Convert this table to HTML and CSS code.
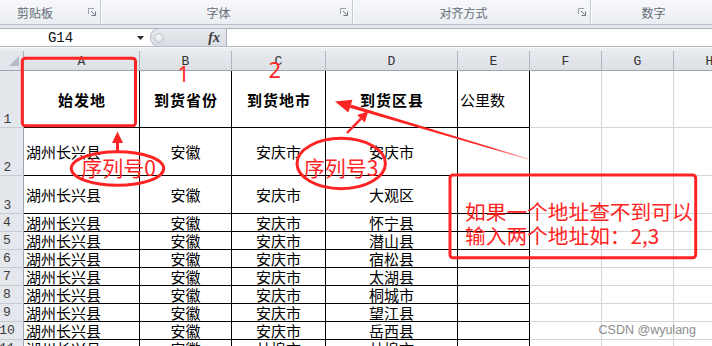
FILE: index.html
```html
<!DOCTYPE html>
<html lang="zh-CN">
<head>
<meta charset="utf-8">
<title>Excel</title>
<link rel="stylesheet" href="styles.css">
</head>
<body>
<div class="app">
  <div class="ribbon">
    <div class="group g1">
      <span class="group-label">剪贴板</span>
      <svg class="launcher" viewBox="0 0 8 8"><path d="M0.5 6V0.5H6" stroke="#9aa1aa" fill="none"/><path d="M3 3L6.5 6.5M7.5 3.5V7.5H3.5" stroke="#6c747f" fill="none"/></svg>
    </div>
    <div class="group g2">
      <span class="group-label">字体</span>
      <svg class="launcher" viewBox="0 0 8 8"><path d="M0.5 6V0.5H6" stroke="#9aa1aa" fill="none"/><path d="M3 3L6.5 6.5M7.5 3.5V7.5H3.5" stroke="#6c747f" fill="none"/></svg>
    </div>
    <div class="group g3">
      <span class="group-label">对齐方式</span>
      <svg class="launcher" viewBox="0 0 8 8"><path d="M0.5 6V0.5H6" stroke="#9aa1aa" fill="none"/><path d="M3 3L6.5 6.5M7.5 3.5V7.5H3.5" stroke="#6c747f" fill="none"/></svg>
    </div>
    <div class="group g4">
      <span class="group-label">数字</span>
      <span class="launcher"></span>
    </div>
  </div>
  <div class="band"></div>
  <div class="formula-bar">
    <div class="namebox">
      <span class="namebox-text">G14</span>
      <svg class="dropdown" viewBox="0 0 7 4"><path d="M0 0H7L3.5 4Z" fill="#2b2b2b"/></svg>
    </div>
    <div class="grip">
      <span class="knob"></span>
      <span class="fx">fx</span>
    </div>
    <div class="formula-input"></div>
  </div>
  <div class="band2"></div>

  <div class="sheet">
    <!-- header row -->
    <div class="corner"><svg width="10" height="10" viewBox="0 0 10 10"><path d="M10 0V10H0Z" fill="#b7bcc4"/></svg></div>
    <div class="ch">A</div><div class="ch">B</div><div class="ch">C</div><div class="ch">D</div>
    <div class="ch">E</div><div class="ch">F</div><div class="ch">G</div><div class="ch">H</div>

    <!-- row 1 -->
    <div class="rh">1</div>
    <div class="c bk ctr bold">始发地</div>
    <div class="c bk ctr bold">到货省份</div>
    <div class="c bk ctr bold">到货地市</div>
    <div class="c bk ctr bold">到货区县</div>
    <div class="c bk lft">公里数</div>
    <div class="c"></div><div class="c"></div><div class="c"></div>

    <!-- row 2 -->
    <div class="rh">2</div>
    <div class="c bk lft">湖州长兴县</div>
    <div class="c bk ctr">安徽</div>
    <div class="c bk ctr">安庆市</div>
    <div class="c bk ctr">安庆市</div>
    <div class="c bk"></div>
    <div class="c"></div><div class="c"></div><div class="c"></div>

    <!-- row 3 -->
    <div class="rh">3</div>
    <div class="c bk lft">湖州长兴县</div>
    <div class="c bk ctr">安徽</div>
    <div class="c bk ctr">安庆市</div>
    <div class="c bk ctr">大观区</div>
    <div class="c bk"></div>
    <div class="c"></div><div class="c"></div><div class="c"></div>

    <!-- row 4 -->
    <div class="rh sm">4</div>
    <div class="c bk lft sm">湖州长兴县</div>
    <div class="c bk ctr sm">安徽</div>
    <div class="c bk ctr sm">安庆市</div>
    <div class="c bk ctr sm">怀宁县</div>
    <div class="c bk sm"></div>
    <div class="c sm"></div><div class="c sm"></div><div class="c sm"></div>

    <!-- row 5 -->
    <div class="rh sm">5</div>
    <div class="c bk lft sm">湖州长兴县</div>
    <div class="c bk ctr sm">安徽</div>
    <div class="c bk ctr sm">安庆市</div>
    <div class="c bk ctr sm">潜山县</div>
    <div class="c bk sm"></div>
    <div class="c sm"></div><div class="c sm"></div><div class="c sm"></div>

    <!-- row 6 -->
    <div class="rh sm">6</div>
    <div class="c bk lft sm">湖州长兴县</div>
    <div class="c bk ctr sm">安徽</div>
    <div class="c bk ctr sm">安庆市</div>
    <div class="c bk ctr sm">宿松县</div>
    <div class="c bk sm"></div>
    <div class="c sm"></div><div class="c sm"></div><div class="c sm"></div>

    <!-- row 7 -->
    <div class="rh sm">7</div>
    <div class="c bk lft sm">湖州长兴县</div>
    <div class="c bk ctr sm">安徽</div>
    <div class="c bk ctr sm">安庆市</div>
    <div class="c bk ctr sm">太湖县</div>
    <div class="c bk sm"></div>
    <div class="c sm"></div><div class="c sm"></div><div class="c sm"></div>

    <!-- row 8 -->
    <div class="rh sm">8</div>
    <div class="c bk lft sm">湖州长兴县</div>
    <div class="c bk ctr sm">安徽</div>
    <div class="c bk ctr sm">安庆市</div>
    <div class="c bk ctr sm">桐城市</div>
    <div class="c bk sm"></div>
    <div class="c sm"></div><div class="c sm"></div><div class="c sm"></div>

    <!-- row 9 -->
    <div class="rh sm">9</div>
    <div class="c bk lft sm">湖州长兴县</div>
    <div class="c bk ctr sm">安徽</div>
    <div class="c bk ctr sm">安庆市</div>
    <div class="c bk ctr sm">望江县</div>
    <div class="c bk sm"></div>
    <div class="c sm"></div><div class="c sm"></div><div class="c sm"></div>

    <!-- row 10 -->
    <div class="rh sm">10</div>
    <div class="c bk lft sm">湖州长兴县</div>
    <div class="c bk ctr sm">安徽</div>
    <div class="c bk ctr sm">安庆市</div>
    <div class="c bk ctr sm">岳西县</div>
    <div class="c bk sm"></div>
    <div class="c sm"></div><div class="c sm"></div><div class="c sm"></div>

    <!-- row 11 -->
    <div class="rh sm">11</div>
    <div class="c bk lft sm">湖州长兴县</div>
    <div class="c bk ctr sm">安徽</div>
    <div class="c bk ctr sm">林埠市</div>
    <div class="c bk ctr sm">林埠市</div>
    <div class="c bk sm"></div>
    <div class="c sm"></div><div class="c sm"></div><div class="c sm"></div>
  </div>
</div>

<svg class="annot" width="712" height="346" viewBox="0 0 712 346">
  <defs>
    <linearGradient id="fade" gradientUnits="userSpaceOnUse" x1="335" y1="101" x2="528" y2="159">
      <stop offset="0" stop-color="#ff2424"/>
      <stop offset="0.8" stop-color="#ff2424"/>
      <stop offset="1" stop-color="#ff2424" stop-opacity="0.25"/>
    </linearGradient>
  </defs>
  <!-- box around A1 -->
  <rect x="22.3" y="58.3" width="113.2" height="67.4" rx="3" class="red-stroke"/>
  <!-- column index numbers -->
  <text x="183.5" y="81.7" class="ann-num">1</text>
  <text x="274.7" y="77.7" class="ann-num big">2</text>
  <!-- arrow up to A1 -->
  <path d="M117.5 151V141" class="red-line"/>
  <path d="M117.5 131.5L123 143H112Z" class="red-fill"/>
  <!-- ellipse 0 -->
  <ellipse cx="117.5" cy="168.5" rx="46.2" ry="16.8" class="red-stroke"/>
  <text x="118.5" y="176" class="ann-label">序列号0</text>
  <!-- ellipse 3 -->
  <ellipse cx="341.2" cy="163.5" rx="44.2" ry="25.2" class="red-stroke"/>
  <text x="341" y="175.5" class="ann-label">序列号3</text>
  <!-- arrow to D1 -->
  <path d="M347 133L361 118.7" class="red-line thin"/>
  <path d="M368.3 111.3L364.8 122.6L357.2 115Z" class="red-fill"/>
  <!-- long arrow from callout -->
  <path d="M350.9 104.5L528.2 158.5L527.8 159.5L349.7 107.7Z" fill="url(#fade)"/>
  <path d="M335 101.5L352.4 99.8L348.4 112.5Z" class="red-fill"/>
  <!-- callout box -->
  <rect x="450" y="175" width="245.7" height="82.7" rx="3" class="red-stroke"/>
  <text x="465" y="220" class="ann-callout">如果一个地址查不到可以</text>
  <text x="465" y="244.4" class="ann-callout">输入两个地址如：2,3</text>
  <!-- watermark -->
  <text x="696" y="334" class="watermark">CSDN @wyulang</text>
</svg>
</body>
</html>
```
FILE: styles.css
```css
* { box-sizing: border-box; }
html, body { margin: 0; padding: 0; }
body {
  width: 712px;
  height: 346px;
  overflow: hidden;
  position: relative;
  background: #fff;
  font-family: "Noto Sans CJK SC", "Noto Sans", sans-serif;
}
.app { width: 712px; overflow: hidden; }

/* ribbon group labels */
.ribbon {
  display: flex;
  height: 25px;
  margin-left: -14px;
  background: linear-gradient(#f7f8fa, #eaedf1);
  border-bottom: 1px solid #b8bfc9;
}
.group {
  flex: none;
  display: flex;
  align-items: center;
  height: 24px;
  border-right: 1px solid #c6ccd4;
  box-shadow: 1px 0 0 #fbfcfd;
}
.g1 { width: 115px; }
.g2 { width: 252px; }
.g3 { width: 238px; }
.g4 { width: 142px; }
.group-label {
  flex: 1;
  text-align: center;
  font-size: 12px;
  color: #646c78;
  line-height: 24px;
  padding-top: 2px;
}
.launcher {
  flex: none;
  width: 8px;
  height: 8px;
  margin: 0 4px;
  display: block;
}

.band { height: 3px; background: #e4e8ed; }

/* formula bar */
.formula-bar {
  display: flex;
  height: 19px;
  background: #fff;
  border-top: 1px solid #a9b0ba;
  border-bottom: 1px solid #b3bac3;
}
.namebox {
  width: 150px;
  flex: none;
  display: flex;
  align-items: center;
}
.namebox-text {
  width: 121px;
  text-align: center;
  font-family: "Liberation Mono", monospace;
  font-size: 14px;
  color: #111;
}
.dropdown {
  width: 7px;
  height: 4px;
  margin-left: 16px;
  display: block;
}
.grip {
  width: 77px;
  flex: none;
  display: flex;
  align-items: center;
  background: linear-gradient(#e6e9ed, #d9dde3);
  border: 1px solid #b6bcc5;
  border-right-color: #a9b0ba;
  border-radius: 9px 0 0 9px;
  margin-top: -1px;
  margin-bottom: -1px;
}
.knob {
  width: 10px;
  height: 10px;
  margin-left: 3px;
  border-radius: 50%;
  background: radial-gradient(circle at 40% 35%, #f7f8fa, #cfd4db);
  border: 1px solid #c0c5cc;
}
.fx {
  margin-left: auto;
  margin-right: 6px;
  font-family: "Liberation Serif", serif;
  font-style: italic;
  font-weight: bold;
  font-size: 14px;
  color: #3a3a3a;
  line-height: 17px;
}
.formula-input { flex: 1; background: #fff; }

.band2 { height: 4px; background: #e9ecf0; border-top: 1px solid #f6f7f9; }

/* sheet */
.sheet {
  display: grid;
  grid-template-columns: 24px 116px 92px 94px 132px 72px 72px 72px 72px;
  grid-template-rows: 20px 57px 48px 38px repeat(8, 18px);
  width: 712px;
}
.corner {
  background: #e2e5ea;
  border-right: 1px solid #a7aeb8;
  border-bottom: 1px solid #9ea5af;
  display: flex;
  align-items: flex-end;
  justify-content: flex-end;
  padding: 0 4px 4px 0;
}
.ch {
  background: linear-gradient(#e6e9ed, #dde1e6);
  border-right: 1px solid #b0b6bf;
  border-bottom: 1px solid #9ea5af;
  display: flex;
  align-items: center;
  justify-content: center;
  font-family: "Liberation Mono", monospace;
  font-size: 13px;
  color: #333;
  padding-top: 1px;
}
.rh {
  background: #e4e7eb;
  border-right: 1px solid #9ea5af;
  border-bottom: 1px solid #c8ccd2;
  display: flex;
  align-items: flex-end;
  justify-content: center;
  padding-right: 8px;
  font-family: "Liberation Mono", monospace;
  font-size: 13px;
  line-height: 15px;
  color: #3c3c3c;
}
.rh.sm { padding-right: 9px; line-height: 16px; }
.c {
  border-right: 1px solid #d6d6d6;
  border-bottom: 1px solid #d6d6d6;
  display: flex;
  align-items: center;
  font-size: 15px;
  color: #000;
  white-space: nowrap;
}
.c.sm { align-items: flex-end; line-height: 16px; }
.bk { border-color: #000; }
.ctr { justify-content: center; }
.lft { padding-left: 2px; }
.bold { font-weight: bold; letter-spacing: 1px; padding-left: 1px; }

/* annotation overlay */
.annot {
  position: absolute;
  top: 0;
  left: 0;
  pointer-events: none;
}
.red-stroke { fill: none; stroke: #ff2424; stroke-width: 3; }
.red-line { fill: none; stroke: #ff2424; stroke-width: 3; }
.red-line.thin { stroke-width: 2.5; }
.red-fill { fill: #ff2424; }
.ann-num {
  font-family: "Noto Sans", "Noto Sans CJK SC", sans-serif;
  font-size: 21px;
  font-weight: 400;
  fill: #ff2424;
  text-anchor: middle;
}
.ann-num.big { font-size: 22px; }
.ann-label {
  font-family: "Noto Sans CJK SC", sans-serif;
  font-size: 21px;
  fill: #ff2424;
  text-anchor: middle;
}
.ann-callout {
  font-family: "Noto Sans CJK SC", sans-serif;
  font-size: 20.7px;
  fill: #ff2424;
}
.watermark {
  font-family: "Liberation Sans", Arial, sans-serif;
  font-size: 12.5px;
  fill: #8c8c8c;
  text-anchor: end;
}
```
